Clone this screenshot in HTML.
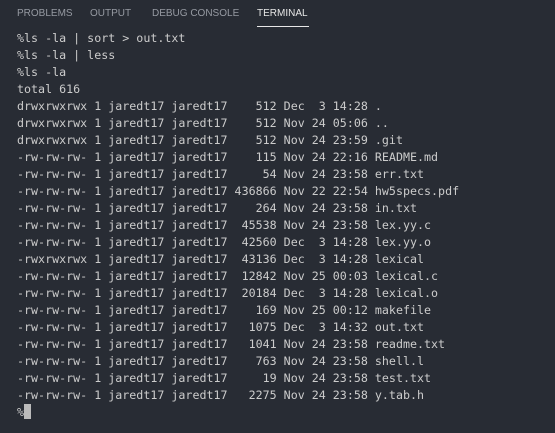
<!DOCTYPE html>
<html><head><style>
html,body{margin:0;padding:0;background:#282c34;width:555px;height:433px;overflow:hidden}
.tabs{position:absolute;top:0;left:0;height:28px;font-family:"Liberation Sans","DejaVu Sans",sans-serif;font-size:10px;color:#969aa2}
.tab{position:absolute;top:8px;white-space:nowrap}
.act{color:#e7e7e7}
.ul{position:absolute;left:257px;top:26px;width:52px;height:1px;background:#e7e7e7}
pre{position:absolute;left:17px;top:30px;margin:0;font-family:"DejaVu Sans Mono","Liberation Mono",monospace;font-size:11.66px;line-height:17px;color:#cccccc}
.cur{display:inline-block;width:7px;height:15px;background:#bbbbbb;vertical-align:-3px}
</style></head><body>
<div class="tabs">
<span class="tab" style="left:17px">PROBLEMS</span>
<span class="tab" style="left:90px">OUTPUT</span>
<span class="tab" style="left:152px">DEBUG CONSOLE</span>
<span class="tab act" style="left:257px">TERMINAL</span>
</div>
<div class="ul"></div>
<pre>%ls -la | sort &gt; out.txt
%ls -la | less
%ls -la
total 616
drwxrwxrwx 1 jaredt17 jaredt17    512 Dec  3 14:28 .
drwxrwxrwx 1 jaredt17 jaredt17    512 Nov 24 05:06 ..
drwxrwxrwx 1 jaredt17 jaredt17    512 Nov 24 23:59 .git
-rw-rw-rw- 1 jaredt17 jaredt17    115 Nov 24 22:16 README.md
-rw-rw-rw- 1 jaredt17 jaredt17     54 Nov 24 23:58 err.txt
-rw-rw-rw- 1 jaredt17 jaredt17 436866 Nov 22 22:54 hw5specs.pdf
-rw-rw-rw- 1 jaredt17 jaredt17    264 Nov 24 23:58 in.txt
-rw-rw-rw- 1 jaredt17 jaredt17  45538 Nov 24 23:58 lex.yy.c
-rw-rw-rw- 1 jaredt17 jaredt17  42560 Dec  3 14:28 lex.yy.o
-rwxrwxrwx 1 jaredt17 jaredt17  43136 Dec  3 14:28 lexical
-rw-rw-rw- 1 jaredt17 jaredt17  12842 Nov 25 00:03 lexical.c
-rw-rw-rw- 1 jaredt17 jaredt17  20184 Dec  3 14:28 lexical.o
-rw-rw-rw- 1 jaredt17 jaredt17    169 Nov 25 00:12 makefile
-rw-rw-rw- 1 jaredt17 jaredt17   1075 Dec  3 14:32 out.txt
-rw-rw-rw- 1 jaredt17 jaredt17   1041 Nov 24 23:58 readme.txt
-rw-rw-rw- 1 jaredt17 jaredt17    763 Nov 24 23:58 shell.l
-rw-rw-rw- 1 jaredt17 jaredt17     19 Nov 24 23:58 test.txt
-rw-rw-rw- 1 jaredt17 jaredt17   2275 Nov 24 23:58 y.tab.h
%<span class="cur"></span></pre>
</body></html>
